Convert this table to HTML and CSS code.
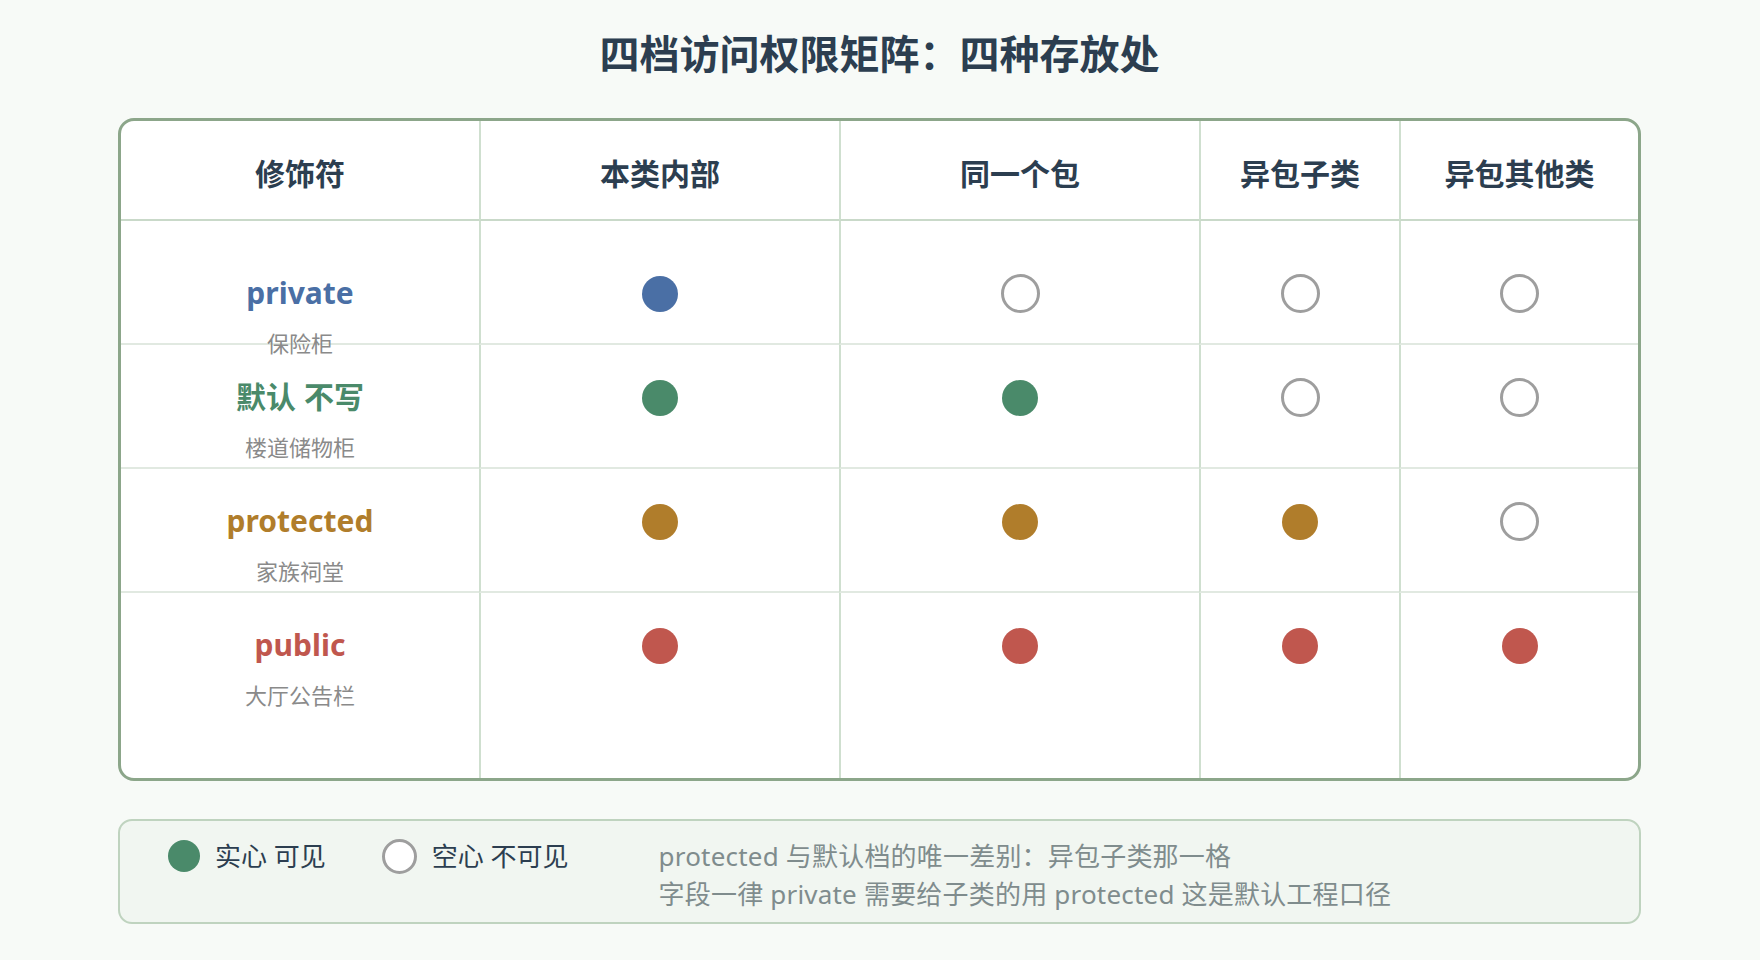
FILE: index.html
```html
<!DOCTYPE html>
<html lang="zh-CN">
<head>
<meta charset="utf-8">
<title>四档访问权限矩阵</title>
<link rel="stylesheet" href="styles.css">
</head>
<body>
<div class="page">
  <h1 class="title">四档访问权限矩阵：四种存放处</h1>

  <div class="matrix">
    <div class="cell head">修饰符</div>
    <div class="cell head">本类内部</div>
    <div class="cell head">同一个包</div>
    <div class="cell head">异包子类</div>
    <div class="cell head">异包其他类</div>

    <div class="cell name first"><span class="mod c-private">private</span><span class="sub">保险柜</span></div>
    <div class="cell dots first"><span class="slot"><span class="dot fill c-blue"></span></span></div>
    <div class="cell dots first"><span class="slot"><span class="dot hollow"></span></span></div>
    <div class="cell dots first"><span class="slot"><span class="dot hollow"></span></span></div>
    <div class="cell dots first"><span class="slot"><span class="dot hollow"></span></span></div>

    <div class="cell name"><span class="mod c-default">默认 不写</span><span class="sub">楼道储物柜</span></div>
    <div class="cell dots"><span class="slot"><span class="dot fill c-green"></span></span></div>
    <div class="cell dots"><span class="slot"><span class="dot fill c-green"></span></span></div>
    <div class="cell dots"><span class="slot"><span class="dot hollow"></span></span></div>
    <div class="cell dots"><span class="slot"><span class="dot hollow"></span></span></div>

    <div class="cell name"><span class="mod c-protected">protected</span><span class="sub">家族祠堂</span></div>
    <div class="cell dots"><span class="slot"><span class="dot fill c-orange"></span></span></div>
    <div class="cell dots"><span class="slot"><span class="dot fill c-orange"></span></span></div>
    <div class="cell dots"><span class="slot"><span class="dot fill c-orange"></span></span></div>
    <div class="cell dots"><span class="slot"><span class="dot hollow"></span></span></div>

    <div class="cell name last"><span class="mod c-public">public</span><span class="sub">大厅公告栏</span></div>
    <div class="cell dots last"><span class="slot"><span class="dot fill c-red"></span></span></div>
    <div class="cell dots last"><span class="slot"><span class="dot fill c-red"></span></span></div>
    <div class="cell dots last"><span class="slot"><span class="dot fill c-red"></span></span></div>
    <div class="cell dots last"><span class="slot"><span class="dot fill c-red"></span></span></div>
  </div>

  <div class="legend">
    <div class="item"><span class="ldot"></span><span class="label">实心 可见</span></div>
    <div class="item item-2"><span class="lring"></span><span class="label">空心 不可见</span></div>
    <div class="note">
      <div>protected 与默认档的唯一差别：异包子类那一格</div>
      <div>字段一律 private 需要给子类的用 protected 这是默认工程口径</div>
    </div>
  </div>
</div>
</body>
</html>
```

FILE: styles.css
```css
* { box-sizing: border-box; }

html, body {
  margin: 0;
  padding: 0;
}

body {
  background: #f7faf7;
  font-family: "Noto Sans", "Noto Sans CJK SC", sans-serif;
  color: #2c3e50;
  width: 1760px;
  height: 960px;
  overflow: hidden;
}

.page {
  padding-left: 118px;
  width: 1760px;
}

.title {
  width: 1523px;
  margin: 30px 0 40px 0;
  font-size: 40px;
  line-height: 48px;
  font-weight: 700;
  text-align: center;
  color: #2c3e50;
}

.matrix {
  width: 1523px;
  height: 663px;
  border: 3px solid #8ca68a;
  border-radius: 16px;
  background: #ffffff;
  overflow: hidden;
  display: grid;
  grid-template-columns: 358px 360px 360px 200px 239px;
  grid-template-rows: 100px 124px 124px 124px 185px;
}

.cell {
  display: flex;
  justify-content: center;
  align-items: flex-start;
  border-bottom: 2px solid #e1e9e1;
}

.cell:not(:nth-child(5n+1)) {
  border-left: 2px solid #cfdfcf;
}

.cell.last {
  border-bottom: none;
}

.head {
  padding-top: 35px;
  font-size: 30px;
  line-height: 36px;
  font-weight: 700;
  color: #2c3e50;
  border-bottom: 2px solid #c9d9c9;
}

.name {
  flex-direction: column;
  justify-content: flex-start;
  align-items: center;
  padding-top: 34px;
}

.name.first {
  padding-top: 54px;
}

.mod {
  font-size: 30px;
  line-height: 36px;
  font-weight: 700;
  white-space: nowrap;
}

.sub {
  margin-top: 18px;
  font-size: 22px;
  line-height: 28px;
  color: #8a8a8a;
  white-space: nowrap;
}

.c-private { color: #4a6fa5; }
.c-default { color: #4a8a6a; }
.c-protected { color: #b07d2b; }
.c-public { color: #c0574e; }

.dots {
  padding-top: 33px;
}

.dots.first {
  padding-top: 53px;
}

.slot {
  width: 39px;
  height: 39px;
  display: flex;
  align-items: center;
  justify-content: center;
}

.dot {
  display: block;
  border-radius: 50%;
}

.dot.fill {
  width: 36px;
  height: 36px;
}

.dot.hollow {
  width: 39px;
  height: 39px;
  border: 3px solid #9e9e9e;
  background: #ffffff;
}

.c-blue { background: #4a6fa5; }
.c-green { background: #4a8a6a; }
.c-orange { background: #b07d2b; }
.c-red { background: #c0574e; }

.legend {
  width: 1523px;
  height: 105px;
  margin-top: 38px;
  border: 2px solid #bfd3bf;
  border-radius: 14px;
  background: #f1f6f1;
  padding: 19px 0 0 48px;
  display: flex;
  align-items: flex-start;
}

.item {
  display: flex;
  align-items: center;
  height: 32px;
  gap: 15px;
}

.item-2 {
  margin-left: 56px;
}

.ldot {
  width: 32px;
  height: 32px;
  border-radius: 50%;
  background: #4a8a6a;
  flex: none;
}

.lring {
  width: 35px;
  height: 35px;
  border-radius: 50%;
  border: 3px solid #9e9e9e;
  background: #ffffff;
  flex: none;
}

.label {
  font-size: 26px;
  line-height: 32px;
  color: #2c3e50;
  white-space: nowrap;
}

.note {
  margin-left: 90px;
  margin-top: -3px;
  font-size: 26px;
  line-height: 38px;
  letter-spacing: 0.2px;
  color: #7f8c8d;
  white-space: nowrap;
}
```
